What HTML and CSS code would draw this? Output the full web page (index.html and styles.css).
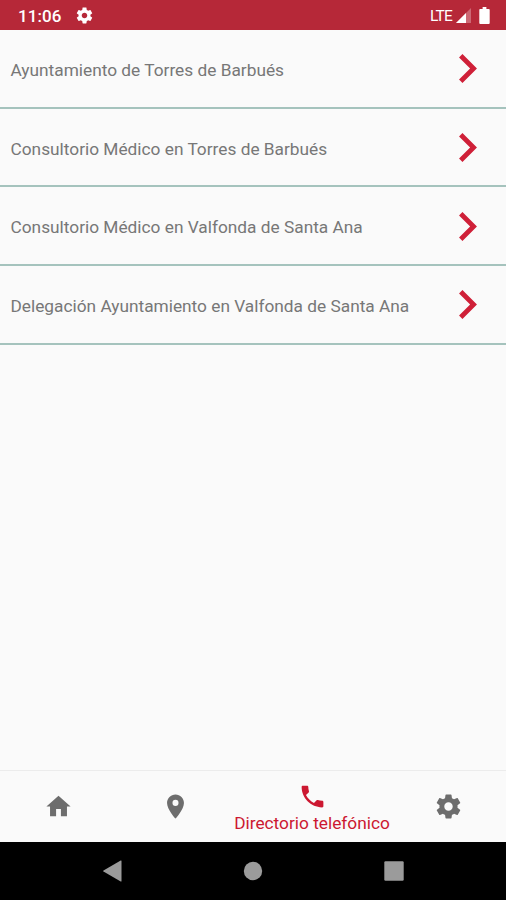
FILE: index.html
```html
<!DOCTYPE html>
<html lang="es">
<head>
<meta charset="utf-8">
<title>Directorio telefónico</title>
<link rel="stylesheet" href="styles.css">
</head>
<body>
<svg class="defs" width="0" height="0" aria-hidden="true">
  <symbol id="gear" viewBox="0 0 24 24"><path d="M19.43 12.98c.04-.32.07-.64.07-.98s-.03-.66-.07-.98l2.11-1.65c.19-.15.24-.42.12-.64l-2-3.46c-.12-.22-.39-.3-.61-.22l-2.49 1c-.52-.4-1.08-.73-1.69-.98l-.38-2.65C14.46 2.18 14.25 2 14 2h-4c-.25 0-.46.18-.49.42l-.38 2.65c-.61.25-1.17.59-1.69.98l-2.49-1c-.23-.09-.49 0-.61.22l-2 3.46c-.13.22-.07.49.12.64l2.11 1.65c-.04.32-.07.65-.07.98s.03.66.07.98l-2.11 1.65c-.19.15-.24.42-.12.64l2 3.46c.12.22.39.3.61.22l2.49-1c.52.4 1.08.73 1.69.98l.38 2.65c.03.24.24.42.49.42h4c.25 0 .46-.18.49-.42l.38-2.65c.61-.25 1.17-.59 1.69-.98l2.49 1c.23.09.49 0 .61-.22l2-3.46c.12-.22.07-.49-.12-.64l-2.11-1.65zM12 15.5c-1.93 0-3.5-1.57-3.5-3.5s1.57-3.5 3.5-3.5 3.5 1.57 3.5 3.5-1.57 3.5-3.5 3.5z"/></symbol>
  <symbol id="chevron" viewBox="8.59 6 7.41 12"><path d="M10 6 8.59 7.41 13.17 12l-4.58 4.59L10 18l6-6z"/></symbol>
</svg>
<div class="screen">
  <header class="status">
    <span class="clock">11:06</span>
    <svg class="status-gear"><use href="#gear"/></svg>
    <span class="network">LTE</span>
    <svg class="signal" viewBox="0 0 15 15"><path d="M15 0v15H0z" opacity=".3"/><path d="M10 5v10H0z"/></svg>
    <svg class="battery" viewBox="0 0 11 18"><path d="M3.5 0h4v2H10q1 0 1 1v14q0 1-1 1H1q-1 0-1-1V3q0-1 1-1h2.500z"/></svg>
  </header>
  <main class="list">
    <a class="row"><span>Ayuntamiento de Torres de Barbués</span><svg class="chevron"><use href="#chevron"/></svg></a>
    <a class="row"><span>Consultorio Médico en Torres de Barbués</span><svg class="chevron"><use href="#chevron"/></svg></a>
    <a class="row"><span>Consultorio Médico en Valfonda de Santa Ana</span><svg class="chevron"><use href="#chevron"/></svg></a>
    <a class="row"><span>Delegación Ayuntamiento en Valfonda de Santa Ana</span><svg class="chevron"><use href="#chevron"/></svg></a>
  </main>
  <nav class="tabs">
    <a class="tab"><svg class="icon" viewBox="0 0 24 24"><path d="M10 20v-6h4v6h5v-8h3L12 3 2 12h3v8z"/></svg></a>
    <a class="tab"><svg class="icon" viewBox="0 0 24 24"><path d="M12 2C8.130 2 5 5.130 5 9c0 5.250 7 13 7 13s7-7.750 7-13c0-3.870-3.130-7-7-7zm0 9.500a2.500 2.500 0 0 1 0-5 2.500 2.500 0 0 1 0 5z"/></svg></a>
    <a class="tab active"><svg class="icon" viewBox="0 0 24 24"><path d="M6.620 10.790c1.440 2.830 3.760 5.140 6.590 6.590l2.200-2.200c.27-.27.67-.36 1.020-.24 1.120.37 2.330.57 3.570.57.55 0 1 .45 1 1V20c0 .55-.45 1-1 1-9.390 0-17-7.610-17-17 0-.55.45-1 1-1h3.500c.55 0 1 .45 1 1 0 1.250.2 2.450.57 3.570.11.35.03.74-.25 1.020l-2.200 2.200z"/></svg><span>Directorio telefónico</span></a>
    <a class="tab"><svg class="icon"><use href="#gear"/></svg></a>
  </nav>
  <footer class="system">
    <svg viewBox="0 0 22 22"><path d="M19.500 1v20q0 .8-.8.400L1.500 11.600q-.8-.6 0-1.200L18.700.6q.8-.4.800.4z"/></svg>
    <svg viewBox="0 0 22 22"><circle cx="11" cy="11" r="9.200"/></svg>
    <svg viewBox="0 0 22 22"><rect x="1.300" y="1.300" width="19.400" height="19.400" rx="1.200"/></svg>
  </footer>
</div>
</body>
</html>
```
FILE: styles.css
```css
body {
  margin: 0;
  background: #fafafa;
  font-family: Roboto, "Liberation Sans", sans-serif;
}

svg {
  display: block;
  flex: none;
  fill: currentColor;
}

.defs {
  position: absolute;
}

.screen {
  display: flex;
  flex-direction: column;
  height: 900px;
  overflow: hidden;
}

.status {
  display: flex;
  align-items: center;
  box-sizing: border-box;
  height: 29.5px;
  padding: 1px 16px 0 18px;
  background: #b62838;
  color: #fff;
}

.clock {
  width: 57px;
  padding-top: 1px;
  font-size: 17px;
  font-weight: 500;
  letter-spacing: 0.1px;
}

.status-gear {
  width: 19px;
  height: 19px;
}

.network {
  margin-left: auto;
  padding-top: 1px;
  font-size: 15.500px;
  letter-spacing: -0.8px;
}

.signal {
  width: 15px;
  height: 15px;
  margin-left: 4px;
}

.battery {
  width: 11px;
  height: 17px;
  margin-left: 8px;
}

.list {
  flex: 1;
  padding-top: 0.25px;
}

.row {
  display: flex;
  align-items: center;
  justify-content: space-between;
  box-sizing: border-box;
  height: 78.750px;
  padding: 1px 29px 0 10.500px;
  border-bottom: 2px solid #a5c3bd;
  color: #777;
  font-size: 17.300px;
  white-space: nowrap;
}

.row span {
  padding-top: 2.500px;
}

.chevron {
  width: 18px;
  height: 29px;
  color: #cf2038;
}

.tabs {
  display: flex;
  box-sizing: border-box;
  height: 72px;
  border-top: 1px solid #ececec;
  color: #6d6d6d;
}

.tab {
  display: flex;
  flex: 0 0 117px;
  flex-direction: column;
  align-items: center;
  justify-content: center;
}

.active {
  gap: 1px;
  flex-basis: 156px;
  padding-top: 4px;
  color: #cc1831;
  font-size: 17.300px;
  line-height: 22px;
  white-space: nowrap;
}

.icon {
  width: 29px;
  height: 29px;
}

.system {
  display: flex;
  align-items: center;
  justify-content: space-between;
  box-sizing: border-box;
  height: 58.500px;
  padding: 0 101.500px 0 102px;
  background: #000;
  color: #9b9b9b;
}

.system svg {
  width: 22px;
  height: 22px;
}
```
